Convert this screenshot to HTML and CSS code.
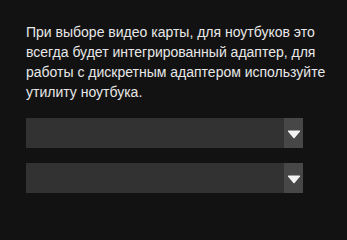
FILE: index.html
```html
<!DOCTYPE html>
<html lang="ru">
<head>
<meta charset="utf-8">
<link rel="stylesheet" href="styles.css">
</head>
<body>
<div class="panel">
  <p class="note">При выборе видео карты, для ноутбуков это всегда будет интегрированный адаптер, для работы с дискретным адаптером используйте утилиту ноутбука.</p>
  <div class="selects">
    <div class="select">
      <span class="value"></span>
      <span class="btn"><svg width="14" height="9" viewBox="0 0 14 9"><path d="M1 1.5 Q0.5 0.5 1.8 0.5 H12.2 Q13.5 0.5 13 1.5 L7.6 8 Q7 8.6 6.4 8 Z" fill="#f2f2f2"/></svg></span>
    </div>
    <div class="select">
      <span class="value"></span>
      <span class="btn"><svg width="14" height="9" viewBox="0 0 14 9"><path d="M1 1.5 Q0.5 0.5 1.8 0.5 H12.2 Q13.5 0.5 13 1.5 L7.6 8 Q7 8.6 6.4 8 Z" fill="#f2f2f2"/></svg></span>
    </div>
  </div>
</div>
</body>
</html>
```
FILE: styles.css
```css
html, body {
  margin: 0;
  padding: 0;
  background: #121212;
}
body {
  height: 206px;
  overflow: hidden;
}
.panel {
  padding: 22px 0 0 26px;
  font-family: "Liberation Sans", Arial, sans-serif;
  font-size: 14px;
  line-height: 20px;
  color: #e8e8e8;
}
.note {
  margin: 0;
  width: 300px;
}
.selects {
  margin-top: 16px;
  display: flex;
  flex-direction: column;
  gap: 15px;
  width: 277px;
}
.select {
  display: flex;
  height: 30px;
  background: #323232;
}
.value {
  flex: 1;
}
.btn {
  width: 19px;
  background: #474747;
  display: flex;
  align-items: center;
  justify-content: center;
  padding-top: 2px;
  box-sizing: border-box;
}
.btn svg {
  display: block;
}
```
